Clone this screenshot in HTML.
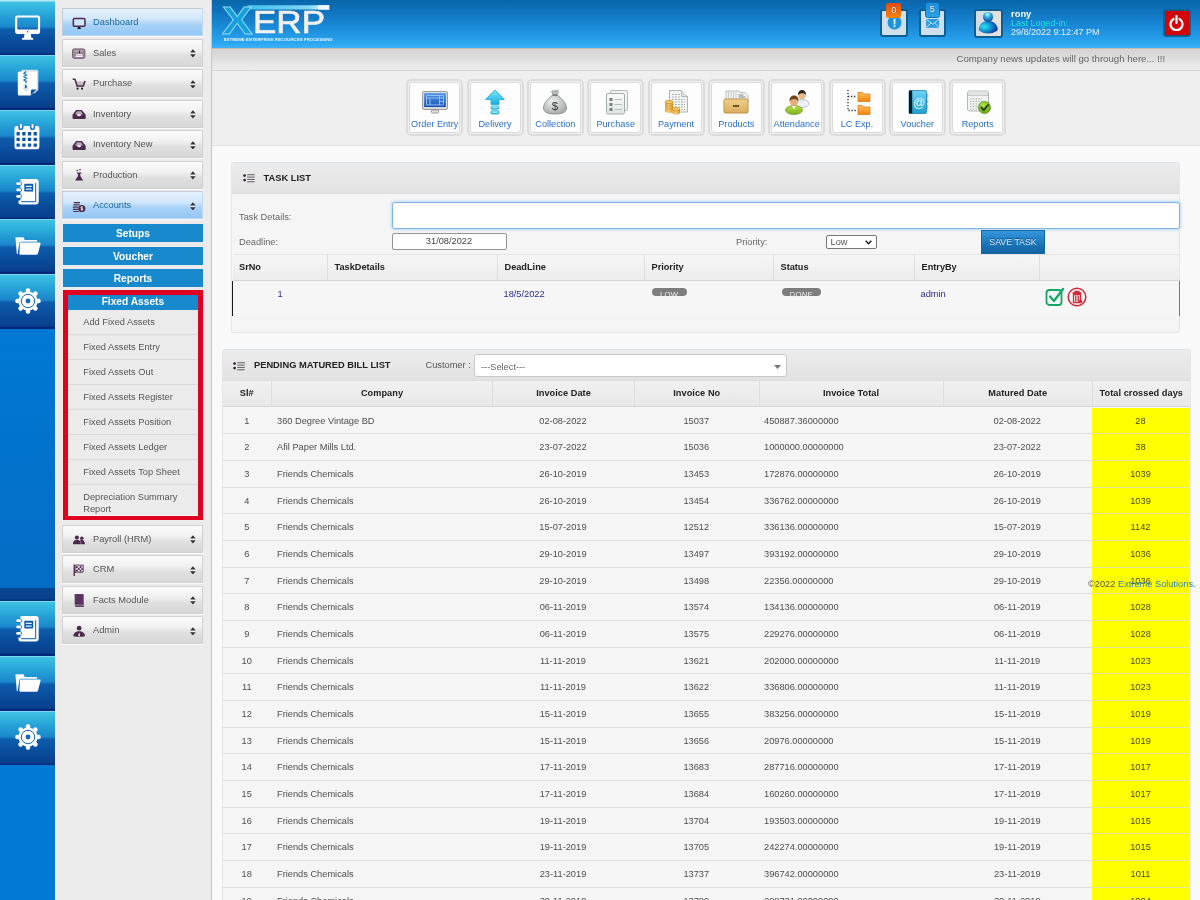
<!DOCTYPE html>
<html lang="en"><head><meta charset="utf-8"><title>XERP Dashboard</title>
<style>
*{box-sizing:border-box}
html,body{margin:0;padding:0}
body{width:1200px;height:900px;overflow:hidden;position:relative;background:#f9f9f9;font-family:"Liberation Sans",sans-serif;font-size:9.25px;color:#555}
#app{position:absolute;left:0;top:0;width:1200px;height:900px;overflow:hidden;will-change:transform}
.abs{position:absolute}
#lb{position:absolute;left:0;top:0;width:54.5px;height:900px;background:#0079d4;overflow:hidden}
.tile{position:absolute;left:0;width:55px;height:54.7px;background:linear-gradient(#a4e6f6 0,#3dc0e3 1.300px,#30b2dd 8px,#2299d3 18px,#1b88cd 25.500px,#0d5cac 28.500px,#0a4d9d 40px,#083f8d 52.200px,#04297b 53.200px,#04297b 54.700px)}
.tile svg{position:absolute}
#sb{position:absolute;left:54.5px;top:0;width:157.5px;height:900px;background:#ebebeb;border-left:2.500px solid #f4eeea;border-right:1px solid #c6c6c6}
.mi{position:absolute;left:62px;width:141.400px;height:28px;border:1px solid #d0d0d0;border-radius:1px;background:linear-gradient(#fbfbfb 0,#f1f1f1 38%,#e0e0e0 60%,#d7d7d7 100%);color:#555;line-height:26.600px;padding-left:30px;font-size:9.3px;box-shadow:0 1px 0 #fafafa}
.mi.on{background:linear-gradient(#e4f1fd 0,#d2e7fb 38%,#a8d2f7 60%,#93c7f5 100%);border-color:#c6ccd4 #c3dcf3 #b9d5ee #c6ccd4;color:#1d6a9c}
.mi .ic{position:absolute;left:8.500px;top:7.800px;width:14.300px;height:12.500px}
.mi .ar{position:absolute;right:6.800px;top:9.500px;width:5.800px;height:8.800px}
.sh{position:absolute;left:63px;width:140px;height:18px;background:#1989ce;color:#fff;font-weight:bold;font-size:10.2px;text-align:center;line-height:19.400px}
.si{position:absolute;left:68px;width:130px;height:25px;border-bottom:1px solid #d9d9d9;box-shadow:0 1px 0 #f3f3f3;background:#ebebeb;color:#555;padding-left:15.5px;line-height:24px;font-size:9.25px}

#hd{position:absolute;left:212px;top:0;width:988px;height:48.8px;background:linear-gradient(#0a66aa 0,#0f74bf 25%,#1c8ddb 60%,#2ba7f2 90%,#3fb0f4 100%);border-bottom:1px solid #c9b8b0}
#nb{position:absolute;left:212px;top:48.8px;width:988px;height:22.2px;background:linear-gradient(#d5d5d5,#d9d9d9 30%,#e6e6e6 70%,#ececec);border-bottom:1px solid #d2d2d2}
#ql{position:absolute;left:212px;top:71px;width:988px;height:75px;background:#efefef;border-bottom:1px solid #e2e2e2}
.hb{position:absolute;top:8.7px;width:27.2px;height:28px;border:2.500px solid #0d5f92;border-radius:3px;background:#cfe0ec}
.bdg{position:absolute;top:-7.7px;left:4px;width:14.500px;height:15px;border-radius:2.500px;color:#fff;font-size:9px;text-align:center;line-height:14px;text-shadow:0 0 1px #333}
.qb{position:absolute;top:79.4px;width:57px;height:57px;border:2px solid #dcdcdc;border-radius:5px;background:#efefef}
.qb i{position:absolute;left:1px;top:1px;right:1px;bottom:1px;background:#fdfdfd;border:1px solid #dadada;border-radius:3px}
.qb span{position:absolute;left:-6px;right:-6px;top:38px;text-align:center;color:#2a72cc;font-size:9.15px;line-height:11px;white-space:nowrap}
.qb svg{position:absolute;left:12.6px;top:7.800px;width:28px;height:26px}

.pn{position:absolute;background:#f5f5f5;border:1px solid #e6e6e6;border-top-color:#dbe4ec;border-radius:3px}
.ph{position:absolute;left:0;right:0;top:0;height:31px;background:linear-gradient(#ececec,#e2e2e2);border-bottom:1px solid #dedede;border-radius:3px 3px 0 0}
.pt{position:absolute;top:0;line-height:31px;font-weight:bold;font-size:9.3px;color:#222;white-space:nowrap}
.lbl{position:absolute;color:#666;font-size:9.25px;line-height:11px;white-space:nowrap}
.th{position:absolute;top:0;height:100%;border-left:1px solid #dedede;font-weight:bold;color:#222;font-size:9.2px;white-space:nowrap}
.t1h{position:absolute;left:232.5px;top:254.2px;width:946px;height:26.5px;background:linear-gradient(#f6f6f6,#ececec);border-top:1px solid #e3e3e3;border-bottom:1.500px solid #d4d4d4}
.t1h .th{line-height:25px;padding-left:6.500px}
.nv{position:absolute;color:#2a2a8c;font-size:9.25px;line-height:11px;white-space:nowrap}
.pill{position:absolute;height:8px;border-radius:4px;background:#7d7d7d;color:#f0f0f0;font-size:7.8px;font-weight:normal;text-align:center;line-height:13.500px;letter-spacing:.2px}
.t2h{position:absolute;left:222.5px;top:380.5px;width:967px;height:26.700px;background:linear-gradient(#f0f0f0,#e8e8e8);border-bottom:1.500px solid #d6d6d6}
.t2h .th{line-height:25px;text-align:center;letter-spacing:.05px}
.r{position:absolute;left:222.5px;width:967px;height:26.67px;border-bottom:1px solid #e0e0e0;line-height:26.400px;font-size:9.25px;color:#4e4e4e}
.r b{position:absolute;top:0;font-weight:normal;white-space:nowrap}
.r .y{position:absolute;left:869.5px;width:97px;top:0;height:26.67px;background:#ffff00;text-align:center;color:#4a4a08;border-bottom:1px solid #e4e49a}
</style></head>
<body>
<div id="app">
<div id="lb"><div class="abs" style="left:0;top:0;width:55px;height:1px;background:#b4e6f4"></div><div class="abs" style="left:0;top:328px;width:55px;height:260px;background:linear-gradient(#0079d4,#046cc4)"></div><div class="abs" style="left:0;top:588px;width:55px;height:13px;background:linear-gradient(#0a4696,#073f8c 80%,#062f78)"></div><div class="tile" style="top:0.5px"><svg style="left:15px;top:14.500px" width="26" height="26" viewBox="0 0 26 26"><path d="M2.600 0.400h20a2.500 2.500 0 0 1 2.500 2.500v13.700a2.500 2.500 0 0 1 -2.500 2.500h-20a2.500 2.500 0 0 1 -2.500 -2.500v-13.700a2.500 2.500 0 0 1 2.500 -2.500zM3 2.600a.8 .8 0 0 0 -.8 .8v10.200a.8 .8 0 0 0 .8 .8h19.200a.8 .8 0 0 0 .8 -.8v-10.200a.8 .8 0 0 0 -.8 -.8z" fill="#fff" fill-rule="evenodd"/><path d="M9.500 19h6.200l0.900 4.200h-8z" fill="#fff"/><rect x="7" y="23" width="11.200" height="1.700" rx=".5" fill="#fff"/><circle cx="12.600" cy="16.800" r="0.800" fill="#0c5bab"/></svg></div><div class="tile" style="top:55.2px"><svg style="left:15.500px;top:13.350px" width="24" height="28" viewBox="0 0 24 28"><path d="M5.500 0.700h15.300a1.500 1.500 0 0 1 1.500 1.500v18.500l-3.500 3.500h-13.300z" fill="#cfe0f0"/><path d="M3.300 2.500h16.100a1.500 1.500 0 0 1 1.500 1.500v16.200l-6.300 6.300h-11.300a1.500 1.500 0 0 1 -1.500 -1.500v-21a1.500 1.500 0 0 1 1.500 -1.500z" fill="#fdfdfd"/><path d="M14.800 26.300v-4.300a1.500 1.500 0 0 1 1.500 -1.500h4.300z" fill="#0d52a4"/><path d="M10.200 2.500l-2.300 1.700l2.600 1.700l-2.600 1.700l2.600 1.700l-2.600 1.700l2.600 1.700l-1 1" fill="none" stroke="#1a74c0" stroke-width="1.200"/><rect x="8" y="14.500" width="3.600" height="7.200" rx="1.600" fill="#dfe9f4" stroke="#b9cde4" stroke-width=".5"/><rect x="9" y="16" width="1.600" height="3.400" rx=".8" fill="#0d52a4"/></svg></div><div class="tile" style="top:109.9px"><svg style="left:14.400px;top:14.100px" width="26" height="26" viewBox="0 0 26 26"><rect x="0.500" y="1.900" width="24.900" height="23.300" rx="2.200" fill="#fdfdfd"/><path d="M4.300 1.500v2a2.600 2.600 0 0 0 5.200 0v-2zM15.900 1.500v2a2.600 2.600 0 0 0 5.200 0v-2z" fill="#1a7cc4"/><rect x="5.900" y="0" width="2" height="4.600" rx="1" fill="#fdfdfd"/><rect x="17.500" y="0" width="2" height="4.600" rx="1" fill="#fdfdfd"/><g fill="#0c55a8"><rect x="2.5" y="8.1" width="3.300" height="3.300" rx=".5"/><rect x="8.2" y="8.1" width="3.300" height="3.300" rx=".5"/><rect x="13.9" y="8.1" width="3.300" height="3.300" rx=".5"/><rect x="19.6" y="8.1" width="3.300" height="3.300" rx=".5"/><rect x="2.5" y="13.8" width="3.300" height="3.300" rx=".5"/><rect x="8.2" y="13.8" width="3.300" height="3.300" rx=".5"/><rect x="13.9" y="13.8" width="3.300" height="3.300" rx=".5"/><rect x="19.6" y="13.8" width="3.300" height="3.300" rx=".5"/><rect x="2.5" y="19.4" width="3.300" height="3.300" rx=".5"/><rect x="8.2" y="19.4" width="3.300" height="3.300" rx=".5"/><rect x="13.9" y="19.4" width="3.300" height="3.300" rx=".5"/><rect x="19.6" y="19.4" width="3.300" height="3.300" rx=".5"/></g></svg></div><div class="tile" style="top:164.6px"><svg style="left:15.500px;top:13.350px" width="24" height="28" viewBox="0 0 24 28"><path d="M4.500 0.900h15.200a3 3 0 0 1 3 3v19.700a3 3 0 0 1 -3 3h-15a2.300 2.300 0 0 1 -2.300 -2.300v-1.800h2.100z" fill="#fdfdfd"/><path d="M19.700 5v18.700h-14.500" fill="none" stroke="#0f5cac" stroke-width="1"/><rect x="8.300" y="5.800" width="8.900" height="7.600" rx=".6" fill="#0f5cac"/><path d="M9.800 8.300h5.900M9.800 11.200h5.900" stroke="#e8f0f8" stroke-width="1.300"/><g fill="#fdfdfd" stroke="#1068b6" stroke-width=".9"><rect x="0.300" y="4.300" width="5.400" height="2.800" rx="1.400"/><rect x="0.300" y="10.500" width="5.400" height="2.800" rx="1.400"/><rect x="0.300" y="16.900" width="5.400" height="2.800" rx="1.400"/></g><g fill="#fdfdfd"><rect x="0.300" y="4.300" width="4.600" height="2.800" rx="1.400"/><rect x="0.300" y="10.500" width="4.600" height="2.800" rx="1.400"/><rect x="0.300" y="16.900" width="4.600" height="2.800" rx="1.400"/></g></svg></div><div class="tile" style="top:219.3px"><svg style="left:15.200px;top:18.200px" width="26" height="18" viewBox="0 0 26 18"><path d="M0.400 0.300h8.200l1.100 2.600h12.400v1.900h-15.800q-1.700 0 -2 1.700l-1.600 10.400h-0.900z" fill="#f6f9fc"/><path d="M6.300 5.600h18.200q1.400 0 1 1.400l-2.500 9.400q-.4 1.400 -1.800 1.400h-15.600q-1.400 0 -1.200 -1.400l0.500 -9.400q.1 -1.400 1.400 -1.400z" fill="#fdfdfd"/></svg></div><div class="tile" style="top:274.0px"><svg style="left:14px;top:12.600px" width="28" height="28" viewBox="-14 -14 28 28"><g fill="#fdfdfd"><rect x="-2.200" y="-12.700" width="4.400" height="6" rx="1.900" transform="rotate(0)"/><rect x="-2.200" y="-12.700" width="4.400" height="6" rx="1.900" transform="rotate(45)"/><rect x="-2.200" y="-12.700" width="4.400" height="6" rx="1.900" transform="rotate(90)"/><rect x="-2.200" y="-12.700" width="4.400" height="6" rx="1.900" transform="rotate(135)"/><rect x="-2.200" y="-12.700" width="4.400" height="6" rx="1.900" transform="rotate(180)"/><rect x="-2.200" y="-12.700" width="4.400" height="6" rx="1.900" transform="rotate(225)"/><rect x="-2.200" y="-12.700" width="4.400" height="6" rx="1.900" transform="rotate(270)"/><rect x="-2.200" y="-12.700" width="4.400" height="6" rx="1.900" transform="rotate(315)"/></g><circle r="9.600" fill="#fdfdfd"/><circle r="6.700" fill="none" stroke="#1566b6" stroke-width="1"/><circle r="2.400" fill="#1566b6"/></svg></div><div class="tile" style="top:601.3px"><svg style="left:15.500px;top:13.350px" width="24" height="28" viewBox="0 0 24 28"><path d="M4.500 0.900h15.200a3 3 0 0 1 3 3v19.700a3 3 0 0 1 -3 3h-15a2.300 2.300 0 0 1 -2.300 -2.300v-1.800h2.100z" fill="#fdfdfd"/><path d="M19.700 5v18.700h-14.500" fill="none" stroke="#0f5cac" stroke-width="1"/><rect x="8.300" y="5.800" width="8.900" height="7.600" rx=".6" fill="#0f5cac"/><path d="M9.800 8.300h5.900M9.800 11.200h5.900" stroke="#e8f0f8" stroke-width="1.300"/><g fill="#fdfdfd" stroke="#1068b6" stroke-width=".9"><rect x="0.300" y="4.300" width="5.400" height="2.800" rx="1.400"/><rect x="0.300" y="10.500" width="5.400" height="2.800" rx="1.400"/><rect x="0.300" y="16.900" width="5.400" height="2.800" rx="1.400"/></g><g fill="#fdfdfd"><rect x="0.300" y="4.300" width="4.600" height="2.800" rx="1.400"/><rect x="0.300" y="10.500" width="4.600" height="2.800" rx="1.400"/><rect x="0.300" y="16.900" width="4.600" height="2.800" rx="1.400"/></g></svg></div><div class="tile" style="top:656.0px"><svg style="left:15.200px;top:18.200px" width="26" height="18" viewBox="0 0 26 18"><path d="M0.400 0.300h8.200l1.100 2.600h12.400v1.900h-15.800q-1.700 0 -2 1.700l-1.600 10.400h-0.900z" fill="#f6f9fc"/><path d="M6.300 5.600h18.200q1.400 0 1 1.400l-2.500 9.400q-.4 1.400 -1.800 1.400h-15.600q-1.400 0 -1.200 -1.400l0.500 -9.400q.1 -1.400 1.400 -1.400z" fill="#fdfdfd"/></svg></div><div class="tile" style="top:710.7px"><svg style="left:14px;top:12.600px" width="28" height="28" viewBox="-14 -14 28 28"><g fill="#fdfdfd"><rect x="-2.200" y="-12.700" width="4.400" height="6" rx="1.900" transform="rotate(0)"/><rect x="-2.200" y="-12.700" width="4.400" height="6" rx="1.900" transform="rotate(45)"/><rect x="-2.200" y="-12.700" width="4.400" height="6" rx="1.900" transform="rotate(90)"/><rect x="-2.200" y="-12.700" width="4.400" height="6" rx="1.900" transform="rotate(135)"/><rect x="-2.200" y="-12.700" width="4.400" height="6" rx="1.900" transform="rotate(180)"/><rect x="-2.200" y="-12.700" width="4.400" height="6" rx="1.900" transform="rotate(225)"/><rect x="-2.200" y="-12.700" width="4.400" height="6" rx="1.900" transform="rotate(270)"/><rect x="-2.200" y="-12.700" width="4.400" height="6" rx="1.900" transform="rotate(315)"/></g><circle r="9.600" fill="#fdfdfd"/><circle r="6.700" fill="none" stroke="#1566b6" stroke-width="1"/><circle r="2.400" fill="#1566b6"/></svg></div></div>
<div id="sb"></div>
<div class="mi on" style="top:8.2px"><svg class="ic" viewBox="0 0 16 14"><rect x="1.500" y="1.800" width="13" height="8.500" rx="1.200" fill="#cfe6fa" stroke="#4a2a4a" stroke-width="1.700"/><path d="M5.500 14h5l-1.500 -2.800h-2z" fill="#1a1a1a"/></svg>Dashboard</div><div class="mi" style="top:38.7px"><svg class="ic" viewBox="0 0 16 14"><rect x="0.600" y="2.100" width="13.800" height="10.600" rx="1.800" fill="#9a8a98" stroke="#6a556a" stroke-width="1"/><path d="M2.500 4.400h10" stroke="#c9bfc8" stroke-width="1"/><path d="M8.400 4v3.200" stroke="#4a2050" stroke-width="1.300"/><path d="M3.800 11.300l1.400 -3.600h5.800l1.400 3.600z" fill="#f6f2f6"/><path d="M5.800 9.300h.01M7.900 9.300h.01M10 9.300h.01" stroke="#6a556a" stroke-width="1" stroke-linecap="round"/></svg>Sales<svg class="ar" viewBox="0 0 7 11"><path d="M3.500 0.300l3.400 4.200h-6.800z M3.500 10.700l3.400 -4.200h-6.800z" fill="#333"/><path d="M0 5.500h7" stroke="#fafafa" stroke-width=".8"/></svg></div><div class="mi" style="top:69.2px"><svg class="ic" viewBox="0 0 16 14"><path d="M4.800 3.800h9l-1.500 4.400h-6.200z" fill="#c4bec4"/><path d="M0.800 1.300h2.500l2.400 7.700h7l1.900 -5.700" fill="none" stroke="#4a2a4a" stroke-width="1.700" stroke-linejoin="round"/><rect x="5.200" y="10.800" width="2.100" height="2.100" fill="#2a1528"/><rect x="10.200" y="10.800" width="2.100" height="2.100" fill="#2a1528"/></svg>Purchase<svg class="ar" viewBox="0 0 7 11"><path d="M3.500 0.300l3.400 4.200h-6.800z M3.500 10.700l3.400 -4.200h-6.800z" fill="#333"/><path d="M0 5.500h7" stroke="#fafafa" stroke-width=".8"/></svg></div><div class="mi" style="top:99.7px"><svg class="ic" viewBox="0 0 16 14"><path d="M0.600 7.500l4 -5.400h6.400l4.300 5.400v3.700a1 1 0 0 1 -1 1h-12.700a1 1 0 0 1 -1 -1z" fill="#4a2a4a"/><path d="M3.400 7.200l2.100 -3.500h4.700l2.100 3.500h-2.500q-.3 1.900 -1.900 1.900t-1.900 -1.900z" fill="#b3a3b3"/><path d="M5.400 7.200h5q-.4 1.900 -2.500 1.900t-2.500 -1.900z" fill="#fff"/></svg>Inventory<svg class="ar" viewBox="0 0 7 11"><path d="M3.500 0.300l3.400 4.200h-6.800z M3.500 10.700l3.400 -4.200h-6.800z" fill="#333"/><path d="M0 5.500h7" stroke="#fafafa" stroke-width=".8"/></svg></div><div class="mi" style="top:130.2px"><svg class="ic" viewBox="0 0 16 14"><path d="M0.600 7.500l4 -5.400h6.400l4.300 5.400v3.700a1 1 0 0 1 -1 1h-12.700a1 1 0 0 1 -1 -1z" fill="#4a2a4a"/><path d="M3.400 7.200l2.100 -3.500h4.700l2.100 3.500h-2.500q-.3 1.900 -1.900 1.900t-1.900 -1.900z" fill="#b3a3b3"/><path d="M5.400 7.200h5q-.4 1.900 -2.500 1.900t-2.500 -1.900z" fill="#fff"/></svg>Inventory New<svg class="ar" viewBox="0 0 7 11"><path d="M3.500 0.300l3.400 4.200h-6.800z M3.500 10.700l3.400 -4.200h-6.800z" fill="#333"/><path d="M0 5.500h7" stroke="#fafafa" stroke-width=".8"/></svg></div><div class="mi" style="top:160.7px"><svg class="ic" viewBox="0 0 16 14"><path d="M5.500 4h5v1.200h-1.500l0.500 3l3 4.800h-9l3 -4.800l0.500 -3h-1.500z" fill="#4a2a4a"/><rect x="5.200" y="1" width="1.500" height="1.500" fill="#4a2a4a"/><rect x="8.200" y="0" width="1.500" height="1.500" fill="#4a2a4a"/></svg>Production<svg class="ar" viewBox="0 0 7 11"><path d="M3.500 0.300l3.400 4.200h-6.800z M3.500 10.700l3.400 -4.200h-6.800z" fill="#333"/><path d="M0 5.500h7" stroke="#fafafa" stroke-width=".8"/></svg></div><div class="mi on" style="top:191.2px"><svg class="ic" viewBox="0 0 16 14"><path d="M2 3h7M1.500 5.500h7M1 8h6M1 10.500h6M1.500 13h6" stroke="#4a2a4a" stroke-width="1.500"/><circle cx="11" cy="9.500" r="4" fill="#4a2a4a"/><path d="M11 7v5M12.300 8.200c-1 -.8 -2.500 -.5 -2.500 .4s2.500 .6 2.500 1.600s-1.600 1.200 -2.600 .4" stroke="#fff" stroke-width=".8" fill="none"/></svg>Accounts<svg class="ar" viewBox="0 0 7 11"><path d="M3.500 0.300l3.400 4.200h-6.800z M3.500 10.700l3.400 -4.200h-6.800z" fill="#333"/><path d="M0 5.500h7" stroke="#fafafa" stroke-width=".8"/></svg></div><div class="mi" style="top:524.7px"><svg class="ic" viewBox="0 0 16 14"><circle cx="5.500" cy="5" r="2.300" fill="#4a2a4a"/><path d="M1 12.500c0 -3.500 2 -5 4.500 -5s4.500 1.500 4.500 5z" fill="#4a2a4a"/><circle cx="11" cy="5.800" r="1.900" fill="#4a2a4a"/><path d="M9 7.800c3 -1 5.500 1 5.500 4.700h-4z" fill="#4a2a4a"/></svg>Payroll (HRM)<svg class="ar" viewBox="0 0 7 11"><path d="M3.500 0.300l3.400 4.200h-6.800z M3.500 10.700l3.400 -4.200h-6.800z" fill="#333"/><path d="M0 5.500h7" stroke="#fafafa" stroke-width=".8"/></svg></div><div class="mi" style="top:555.2px"><svg class="ic" viewBox="0 0 16 14"><path d="M2.500 0.500v13.500" stroke="#4a2a4a" stroke-width="1.500"/><path d="M3.500 1.500c3 -1.500 6 1 9 -.5v8c-3 1.500 -6 -1 -9 .5z" fill="#e8e0e8" stroke="#4a2a4a" stroke-width="1"/><path d="M4.500 2.500h2v2h-2zM8.500 2.500h2v2h-2zM6.500 4.500h2v2h-2zM10.500 4.500h1.500v2h-1.500zM4.500 6.500h2v2h-2zM8.500 6.500h2v2h-2z" fill="#4a2a4a"/></svg>CRM<svg class="ar" viewBox="0 0 7 11"><path d="M3.500 0.300l3.400 4.200h-6.800z M3.500 10.700l3.400 -4.200h-6.800z" fill="#333"/><path d="M0 5.500h7" stroke="#fafafa" stroke-width=".8"/></svg></div><div class="mi" style="top:585.7px"><svg class="ic" viewBox="0 0 16 14"><path d="M3 1.500a1 1 0 0 1 1 -1h8.500v12h-8.500a1 1 0 0 0 0 1.500h9v-1" fill="none" stroke="#4a2a4a" stroke-width="1"/><rect x="3" y="0.500" width="9.500" height="11.500" fill="#5a3560"/></svg>Facts Module<svg class="ar" viewBox="0 0 7 11"><path d="M3.500 0.300l3.400 4.200h-6.800z M3.500 10.700l3.400 -4.200h-6.800z" fill="#333"/><path d="M0 5.500h7" stroke="#fafafa" stroke-width=".8"/></svg></div><div class="mi" style="top:616.2px"><svg class="ic" viewBox="0 0 16 14"><circle cx="8" cy="3.500" r="2.600" fill="#4a2a4a"/><path d="M1.500 12.500c0 -3.500 3 -5.500 6.500 -5.500s6.500 2 6.500 5.500c-4 1 -9 1 -13 0z" fill="#4a2a4a"/><path d="M8 8.500l1 3l-1 1.500l-1 -1.500z" fill="#fff"/></svg>Admin<svg class="ar" viewBox="0 0 7 11"><path d="M3.500 0.300l3.400 4.200h-6.800z M3.500 10.700l3.400 -4.200h-6.800z" fill="#333"/><path d="M0 5.500h7" stroke="#fafafa" stroke-width=".8"/></svg></div>
<div class="sh" style="top:224.4px">Setups</div><div class="sh" style="top:246.8px">Voucher</div><div class="sh" style="top:269.3px">Reports</div><div class="abs" style="left:62.8px;top:290px;width:140.200px;height:230px;border:5px solid #e00020"></div><div class="sh" style="left:67.8px;width:130.200px;top:295px;height:15px;line-height:13px">Fixed Assets</div><div class="si" style="left:67.8px;width:130.200px;top:310.0px">Add Fixed Assets</div><div class="si" style="left:67.8px;width:130.200px;top:335.0px">Fixed Assets Entry</div><div class="si" style="left:67.8px;width:130.200px;top:360.0px">Fixed Assets Out</div><div class="si" style="left:67.8px;width:130.200px;top:385.0px">Fixed Assets Register</div><div class="si" style="left:67.8px;width:130.200px;top:410.0px">Fixed Assets Position</div><div class="si" style="left:67.8px;width:130.200px;top:435.0px">Fixed Assets Ledger</div><div class="si" style="left:67.8px;width:130.200px;top:460.0px">Fixed Assets Top Sheet</div><div class="si" style="left:67.8px;width:130.200px;top:485px;height:30px;line-height:11.800px;padding-top:6.800px;border-bottom:0">Depreciation Summary<br>Report</div><div id="hd"><svg class="abs" style="left:8px;top:2px" width="130" height="44" viewBox="0 0 130 44"><defs><linearGradient id="sw" x1="0" x2="1"><stop offset="0" stop-color="#3fc0ee"/><stop offset=".75" stop-color="#7fd6f5"/><stop offset="1" stop-color="#f4fbff"/></linearGradient></defs><path d="M28 3.300h81v4.200h-84z" fill="url(#sw)"/><path d="M98 3h11.500v4.800h-11.500z" fill="#f4fbff" opacity=".75"/><text x="2" y="31.500" font-family="Liberation Sans, sans-serif" font-weight="bold" font-size="39.500" textLength="30.500" lengthAdjust="spacingAndGlyphs" fill="#169fdb" stroke="#8fdcf7" stroke-width=".9">X</text><text x="33" y="31.100" font-family="Liberation Sans, sans-serif" font-size="31" textLength="72" lengthAdjust="spacingAndGlyphs" fill="#f4f0ee" stroke="#f4f0ee" stroke-width=".6" stroke-linejoin="round">ERP</text><text x="3.700" y="39.400" font-family="Liberation Sans, sans-serif" font-weight="bold" font-size="4.200" textLength="109" lengthAdjust="spacingAndGlyphs" fill="#e8f6ff">EXTREME ENTERPRISE RECOURCES PROCESSING</text></svg><div class="hb" style="left:668.4px"><svg class="abs" style="left:4.200px;top:4.600px" width="15" height="15" viewBox="0 0 16 16"><circle cx="8" cy="8" r="7.500" fill="#1e93dc"/><text x="8" y="13.200" text-anchor="middle" font-family="Liberation Sans, sans-serif" font-weight="bold" font-size="13.500" fill="#fff">!</text></svg><div class="bdg" style="background:linear-gradient(#e64a0a,#f0860e)">0</div></div><div class="hb" style="left:707.3px"><svg class="abs" style="left:4.700px;top:8.100px" width="13.500" height="8.800" viewBox="0 0 15 10"><rect width="15" height="10" fill="#2a9be2"/><path d="M0.500 0.500l7 5.500l7 -5.500M0.500 9.500l5 -5M14.500 9.500l-5 -5" fill="none" stroke="#d8ecf8" stroke-width="1"/></svg><div class="bdg" style="left:3.500px;top:-8.700px;width:15px;height:15.500px;background:linear-gradient(#1b8fdd,#2aa0ea);border:1px solid #0d6fae;line-height:13px">5</div></div><div class="hb" style="left:762px;top:9px;width:29px;height:28.800px;background:linear-gradient(100deg,#cddbe8,#e0dedc 40%,#e4e1de)"><svg class="abs" style="left:0;top:0" width="24" height="24" viewBox="0 0 24 24"><defs><radialGradient id="av" cx=".3" cy=".45" r=".75"><stop offset="0" stop-color="#2ee6f0"/><stop offset=".45" stop-color="#1296d8"/><stop offset="1" stop-color="#0a2a8c"/></radialGradient><radialGradient id="av2" cx=".45" cy=".25" r=".7"><stop offset="0" stop-color="#d8fbff"/><stop offset=".4" stop-color="#35b8e6"/><stop offset="1" stop-color="#0b4aa6"/></radialGradient></defs><path d="M3.300 19.800q-1.200 -2.200 0 -4.400q2.600 -5.400 8.900 -5.400t8.900 5.400q1.200 2.200 0 4.400q-3.900 2.800 -8.900 2.800t-8.900 -2.800z" fill="url(#av)"/><circle cx="12" cy="5.900" r="5" fill="url(#av2)"/></svg></div><div class="abs" style="left:799px;top:8.800px;color:#fff;font-weight:bold;font-size:9.4px;line-height:10px">rony</div><div class="abs" style="left:799px;top:18.100px;color:#22e0e0;font-size:9px;line-height:10px">Last Loged-in:</div><div class="abs" style="left:799px;top:26.500px;color:#e4f2fb;font-size:9px;line-height:10px">29/8/2022 9:12:47 PM</div><div class="abs" style="left:950.5px;top:8.700px;width:28px;height:28.300px;border:2.500px solid #115f8e;border-radius:3.500px;background:#d20508"><svg class="abs" style="left:4.500px;top:4px" width="15" height="16" viewBox="0 0 15 16"><path d="M4.500 4a6 6 0 1 0 6 0" fill="none" stroke="#fff" stroke-width="2.200" stroke-linecap="round"/><path d="M7.500 1v7" stroke="#fff" stroke-width="2.200" stroke-linecap="round"/></svg></div></div>
<div id="nb"><div class="abs" style="left:744.5px;top:4.500px;font-size:9.65px;color:#666;line-height:11px;white-space:nowrap">Company news updates will go through here... !!!</div></div>
<div id="ql"></div>
<div class="qb" style="left:406.2px"><i></i><svg style="margin-left:0.0px" viewBox="0 0 28 26"><defs><linearGradient id="oe" x1="0" y1="0" x2="0" y2="1"><stop offset="0" stop-color="#4f96ea"/><stop offset="1" stop-color="#1148b0"/></linearGradient></defs><rect x="1.500" y="2.500" width="25" height="18" rx="1.500" fill="#d9dadb" stroke="#9a9c9e" stroke-width="1"/><rect x="3.200" y="4.200" width="21.600" height="13.800" fill="url(#oe)"/><path d="M5.500 6.500h17v9.500h-17zM5.500 9h17M9 9v7M18.500 6.500v9.500M18.500 12.500h4" fill="#3f7fd8" fill-opacity=".35" stroke="#9cc6f4" stroke-width=".9"/><rect x="10.500" y="21" width="7" height="3" rx="1" fill="#e4e4e4" stroke="#8f8f8f" stroke-width=".9"/></svg><span>Order Entry</span></div><div class="qb" style="left:466.5px"><i></i><svg style="margin-left:0.0px" viewBox="0 0 28 26"><defs><linearGradient id="dl" x1="0" y1="0" x2="0" y2="1"><stop offset="0" stop-color="#7fe6fb"/><stop offset="1" stop-color="#16aee0"/></linearGradient></defs><path d="M14 1l9.500 9.500h-5.500v5h-8v-5h-5.500z" fill="url(#dl)" stroke="#1aa8d8" stroke-width=".8" stroke-linejoin="round"/><rect x="10" y="17" width="8" height="3.300" rx="1.200" fill="url(#dl)" stroke="#1aa8d8" stroke-width=".7"/><rect x="10" y="21.700" width="8" height="3.300" rx="1.200" fill="url(#dl)" stroke="#1aa8d8" stroke-width=".7"/><path d="M11.500 18.600h5M11.500 23.300h5" stroke="#d8f6ff" stroke-width=".9"/></svg><span>Delivery</span></div><div class="qb" style="left:526.9px"><i></i><svg style="margin-left:0.0px" viewBox="0 0 28 26"><defs><radialGradient id="cl" cx=".4" cy=".35" r=".7"><stop offset="0" stop-color="#eef1f0"/><stop offset="1" stop-color="#a3aaa7"/></radialGradient></defs><path d="M10.500 2.500c1.500 -1.500 2.500 0 3.500 -.8s2.500 -.5 3.500 .8l-1.800 3.500h-3.400z" fill="#b9bfbc" stroke="#7d8582" stroke-width=".7"/><path d="M11.800 6h4.400c4 3 9.300 8 9.300 13c0 4 -4 6 -11.500 6s-11.500 -2 -11.500 -6c0 -5 5.300 -10 9.300 -13z" fill="url(#cl)" stroke="#7d8582" stroke-width=".8"/><path d="M11.500 6.200h5" stroke="#6e7673" stroke-width="1.200"/><text x="14" y="21" text-anchor="middle" font-family="Liberation Sans, sans-serif" font-size="11.500" fill="#2e3231">$</text></svg><span>Collection</span></div><div class="qb" style="left:587.2px"><i></i><svg style="margin-left:0.0px" viewBox="0 0 28 26"><defs><linearGradient id="pu" x1="0" y1="0" x2="0" y2="1"><stop offset="0" stop-color="#fafbfb"/><stop offset="1" stop-color="#dfe5e3"/></linearGradient></defs><rect x="8.500" y="1.500" width="17" height="20" rx="1.500" fill="#f1f4f3" stroke="#a9b3b0" stroke-width=".9"/><rect x="4.500" y="4.500" width="18" height="20.500" rx="1.500" fill="url(#pu)" stroke="#9aa5a2" stroke-width=".9"/><g fill="#76807d"><rect x="7.500" y="9" width="3" height="3"/><rect x="7.500" y="14" width="3" height="3"/><rect x="7.500" y="19" width="3" height="3"/></g><path d="M12.500 10.500h7.500M12.500 15.500h7.500M12.500 20.500h7.500" stroke="#b6bfbc" stroke-width="1"/></svg><span>Purchase</span></div><div class="qb" style="left:647.5px"><i></i><svg style="margin-left:0.0px" viewBox="0 0 28 26"><defs><linearGradient id="py" x1="0" y1="0" x2="1" y2="0"><stop offset="0" stop-color="#e9a73a"/><stop offset=".5" stop-color="#f6cb78"/><stop offset="1" stop-color="#d08f22"/></linearGradient></defs><path d="M7.500 1.500h12l6 6v15.500h-18z" fill="#f3f6f5" stroke="#a3adaa" stroke-width=".9"/><path d="M19.500 1.500v6h6" fill="#dde3e1" stroke="#a3adaa" stroke-width=".8"/><path d="M10 5.500h8M10 8h8M10 10.500h13M10 13h13M10 15.500h13M10 18h13M10 20.500h13" stroke="#9aa4a1" stroke-width=".9" stroke-dasharray="1.800 1.200"/><path d="M3 13v8.500c0 1.400 1.800 2.300 4 2.300s4 -.9 4 -2.300v-8.500z" fill="url(#py)"/><ellipse cx="7" cy="13" rx="4" ry="1.800" fill="#f3c36a" stroke="#c98a1c" stroke-width=".6"/><path d="M3 16c1.500 1.500 6.500 1.500 8 0M3 19c1.500 1.500 6.500 1.500 8 0" fill="none" stroke="#c98a1c" stroke-width=".6"/><path d="M10 20v3.500c0 1.300 1.800 2.100 4 2.100s4 -.8 4 -2.100v-3.500z" fill="url(#py)"/><ellipse cx="14" cy="20" rx="4" ry="1.700" fill="#f3c36a" stroke="#c98a1c" stroke-width=".6"/></svg><span>Payment</span></div><div class="qb" style="left:707.8px"><i></i><svg style="margin-left:0.0px" viewBox="0 0 28 26"><defs><linearGradient id="pr" x1="0" y1="0" x2="0" y2="1"><stop offset="0" stop-color="#f0d08e"/><stop offset="1" stop-color="#d9ae5e"/></linearGradient></defs><path d="M4 2h13l1 1.500h5l3 3v6h-22z" fill="#f2f4f4" stroke="#a9b0ae" stroke-width=".8"/><path d="M6.500 2.500v8M9 2.500v8M11.500 2.500v8M14 2.500v8" stroke="#bcc3c1" stroke-width=".8"/><path d="M16.500 6h5M16.500 8h7" stroke="#7d8583" stroke-width="1"/><rect x="2" y="10" width="24" height="14" rx="1.200" fill="url(#pr)" stroke="#b58a3f" stroke-width=".9"/><rect x="11" y="16" width="6" height="2" fill="#6e5222"/></svg><span>Products</span></div><div class="qb" style="left:768.2px"><i></i><svg style="margin-left:0.0px" viewBox="0 0 28 26"><defs><linearGradient id="at" x1="0" y1="0" x2="0" y2="1"><stop offset="0" stop-color="#b6dc4e"/><stop offset="1" stop-color="#7eb21f"/></linearGradient></defs><ellipse cx="19" cy="14.500" rx="7" ry="4" fill="#eef2f6" stroke="#a9b6c4" stroke-width=".8"/><circle cx="19" cy="6.500" r="3.800" fill="#e9b98a"/><path d="M15 6c0 -3.500 2 -5 4 -5s4.200 1.500 4 5c-1.500 -2.500 -5.500 -2.500 -8 0z" fill="#2d2419"/><path d="M17 10.500l2 3l2 -3z" fill="#fff" stroke="#a9b6c4" stroke-width=".5"/><ellipse cx="11" cy="21" rx="8.500" ry="4.500" fill="url(#at)" stroke="#6d9b1d" stroke-width=".7"/><circle cx="11" cy="12.500" r="4.200" fill="#e3ac78"/><path d="M6.500 12c0 -4 2.200 -5.500 4.500 -5.500s4.700 1.500 4.500 5.500c-1.800 -2.800 -6.500 -2.800 -9 0z" fill="#6b4320"/><path d="M9 17l2 3.500l2 -3.500z" fill="#f6f9ee"/></svg><span>Attendance</span></div><div class="qb" style="left:828.5px"><i></i><svg style="margin-left:0.5px" viewBox="0 0 28 26"><defs><linearGradient id="lc" x1="0" y1="0" x2="0" y2="1"><stop offset="0" stop-color="#ffc05a"/><stop offset="1" stop-color="#f5820f"/></linearGradient></defs><path d="M4 1v20.500h8M4 7.500h8" fill="none" stroke="#333" stroke-width="1.300" stroke-dasharray="1.300 1.700"/><path d="M14 3.500h4.500l1.200 1.500h6.300v7.500h-12z" fill="url(#lc)" stroke="#d9720a" stroke-width=".7"/><path d="M14 16.500h4.500l1.200 1.500h6.300v7.500h-12z" fill="url(#lc)" stroke="#d9720a" stroke-width=".7"/></svg><span>LC Exp.</span></div><div class="qb" style="left:888.8px"><i></i><svg style="margin-left:0.5px" viewBox="0 0 28 26"><defs><linearGradient id="vo" x1="0" y1="0" x2="0" y2="1"><stop offset="0" stop-color="#6ed3f3"/><stop offset="1" stop-color="#1c9fd6"/></linearGradient></defs><rect x="20" y="5" width="4" height="3.500" rx="1" fill="#c9cdd0" stroke="#8c9296" stroke-width=".5"/><rect x="20" y="10.500" width="4" height="3.500" rx="1" fill="#c9cdd0" stroke="#8c9296" stroke-width=".5"/><rect x="20" y="16" width="4" height="3.500" rx="1" fill="#c9cdd0" stroke="#8c9296" stroke-width=".5"/><rect x="5" y="1.500" width="17.500" height="23" rx="1.500" fill="url(#vo)" stroke="#1583b8" stroke-width=".8"/><rect x="5" y="1.500" width="3.200" height="23" fill="#15181a"/><text x="15.300" y="17.500" text-anchor="middle" font-family="Liberation Sans, sans-serif" font-size="12" fill="#eafaff">@</text></svg><span>Voucher</span></div><div class="qb" style="left:949.2px"><i></i><svg style="margin-left:1.0px" viewBox="0 0 28 26"><defs><radialGradient id="rp" cx=".4" cy=".3" r=".8"><stop offset="0" stop-color="#b7e24e"/><stop offset="1" stop-color="#5ea011"/></radialGradient></defs><rect x="2.500" y="2" width="21" height="20" rx="2" fill="#f1f4f3" stroke="#a8b1ae" stroke-width=".9"/><path d="M2.500 6.500h21" stroke="#a8b1ae" stroke-width="1"/><rect x="3" y="2.500" width="20" height="4" rx="1.500" fill="#dfe5e3"/><path d="M5 10h12M5 12.500h12M5 15h9M5 17.500h8M5 20h8" stroke="#9aa4a1" stroke-width=".9" stroke-dasharray="1.500 1.300"/><circle cx="19.500" cy="18.500" r="6" fill="url(#rp)" stroke="#4f8a12" stroke-width=".8"/><path d="M16.300 18.500l2.400 2.700l4.300 -5.200" fill="none" stroke="#24420a" stroke-width="1.900" stroke-linecap="round" stroke-linejoin="round"/></svg><span>Reports</span></div>
<!--PANELS-->
<div class="pn" style="left:231px;top:161.500px;width:949.300px;height:171.400px"><div class="ph"></div><div class="abs" style="left:10.500px;top:11.500px"><svg width="12.2" height="9.4" viewBox="0 0 13 10"><circle cx="1.700" cy="1.700" r="1.500" fill="#3a2040"/><circle cx="1.700" cy="6.500" r="1.500" fill="#3a2040"/><path d="M4.500 0.800h8M4.500 3.300h8M4.500 5.800h8M4.500 8.300h8" stroke="#555" stroke-width="1"/></svg></div><div class="pt" style="left:31.500px">TASK LIST</div></div>
<div class="lbl" style="left:239px;top:211.500px">Task Details:</div><div class="lbl" style="left:239px;top:236.500px">Deadline:</div><div class="abs" style="left:391.500px;top:202px;width:788px;height:26.500px;background:#fff;border:1px solid #7db4e8;border-radius:3px;box-shadow:0 0 3px 1px #bcd9f3"></div><div class="abs" style="left:391.500px;top:233px;width:115px;height:16.500px;background:#fff;border:1px solid #949494;border-radius:2px;text-align:center;line-height:14.500px;color:#444;font-size:9.25px">31/08/2022</div><div class="lbl" style="left:736px;top:236.500px">Priority:</div><div class="abs" style="left:826px;top:234.500px;width:50.500px;height:14px;background:#fff;border:1px solid #767676;border-radius:2px;line-height:12px;padding-left:3.500px;color:#555;font-size:9.25px">Low<svg class="abs" style="right:4px;top:4px" width="7" height="5" viewBox="0 0 7 5"><path d="M0.700 0.800l2.800 3l2.800 -3" fill="none" stroke="#111" stroke-width="1.300"/></svg></div><div class="abs" style="left:981px;top:230px;width:64px;height:23.500px;background:linear-gradient(#3496dc,#1c78bc 55%,#12629f);border:1px solid #1566a4;color:#d8ecfa;font-size:8.8px;text-align:center;line-height:22px;text-shadow:0 -1px 0 #0a4a80">SAVE TASK</div><div class="t1h"><div class="th" style="left:0.0px;border-left:0;">SrNo</div><div class="th" style="left:94.5px;">TaskDetails</div><div class="th" style="left:264.5px;">DeadLine</div><div class="th" style="left:411.5px;">Priority</div><div class="th" style="left:540.5px;">Status</div><div class="th" style="left:681.5px;">EntryBy</div><div class="th" style="left:806.0px;"></div></div><div class="abs" style="left:231.500px;top:281px;width:948px;height:35px;border-left:1.600px solid #1a1a1a;border-right:1.500px solid #777;background:#f6f6f6"></div><div class="nv" style="left:277.500px;top:289px">1</div><div class="nv" style="left:503.500px;top:289px">18/5/2022</div><div class="nv" style="left:920.500px;top:289px">admin</div><div class="pill" style="left:652px;top:287.500px;width:34.500px">LOW</div><div class="pill" style="left:781.500px;top:287.500px;width:39.500px">DONE</div><svg class="abs" style="left:1045px;top:287px" width="20" height="20" viewBox="0 0 20 20"><rect x="1.500" y="3" width="15" height="15" rx="3" fill="none" stroke="#12a765" stroke-width="1.800"/><path d="M5 9.500l4 4.500l9 -12" fill="none" stroke="#12a765" stroke-width="2.300" stroke-linecap="round" stroke-linejoin="round"/></svg><svg class="abs" style="left:1066.500px;top:287px" width="20" height="20" viewBox="0 0 20 20"><circle cx="10" cy="10" r="8.800" fill="none" stroke="#d22a3a" stroke-width="1.500"/><path d="M5.500 6h9M8 6v-1.500h4v1.500M6.500 7.500h7v8h-7z" fill="none" stroke="#d22a3a" stroke-width="1.300"/><path d="M8.500 8.500v6M10 8.500v6M11.500 8.500v6" stroke="#d22a3a" stroke-width=".9"/><circle cx="13.500" cy="14.500" r="1.800" fill="#d22a3a"/></svg>
<div class="pn" style="left:221.500px;top:348.500px;width:969px;height:560px"><div class="ph"></div><div class="abs" style="left:10px;top:12px"><svg width="12.2" height="9.4" viewBox="0 0 13 10"><circle cx="1.700" cy="1.700" r="1.500" fill="#3a2040"/><circle cx="1.700" cy="6.500" r="1.500" fill="#3a2040"/><path d="M4.500 0.800h8M4.500 3.300h8M4.500 5.800h8M4.500 8.300h8" stroke="#555" stroke-width="1"/></svg></div><div class="pt" style="left:31.500px">PENDING MATURED BILL LIST</div></div>
<div class="lbl" style="left:425.500px;top:359.500px;color:#555">Customer :</div><div class="abs" style="left:473.500px;top:354px;width:313px;height:23px;background:#fff;border:1px solid #c8c8c8;border-radius:3px;line-height:24.500px;padding-left:6.500px;color:#666;font-size:9.25px">---Select---<svg class="abs" style="right:5px;top:9.500px" width="7" height="4" viewBox="0 0 7 4"><path d="M0 0h7l-3.500 4z" fill="#777"/></svg></div><div class="t2h"><div class="th" style="left:0.0px;width:48.5px;border-left:0;">Sl#</div><div class="th" style="left:48.5px;width:221.0px;">Company</div><div class="th" style="left:269.5px;width:142.0px;">Invoice Date</div><div class="th" style="left:411.5px;width:124.5px;">Invoice No</div><div class="th" style="left:536.0px;width:184.0px;">Invoice Total</div><div class="th" style="left:720.0px;width:149.5px;">Matured Date</div><div class="th" style="left:869.5px;width:97.5px;">Total crossed days</div></div>
<div class="r" style="top:407.60px"><b style="left:0;width:48.500px;text-align:center">1</b><b style="left:54.500px">360 Degree Vintage BD</b><b style="left:269.500px;width:142px;text-align:center">02-08-2022</b><b style="left:411.500px;width:124.500px;text-align:center">15037</b><b style="left:541.500px">450887.36000000</b><b style="left:720px;width:149.500px;text-align:center">02-08-2022</b><div class="y">28</div></div>
<div class="r" style="top:434.27px"><b style="left:0;width:48.500px;text-align:center">2</b><b style="left:54.500px">Afil Paper Mills Ltd.</b><b style="left:269.500px;width:142px;text-align:center">23-07-2022</b><b style="left:411.500px;width:124.500px;text-align:center">15036</b><b style="left:541.500px">1000000.00000000</b><b style="left:720px;width:149.500px;text-align:center">23-07-2022</b><div class="y">38</div></div>
<div class="r" style="top:460.94px"><b style="left:0;width:48.500px;text-align:center">3</b><b style="left:54.500px">Friends Chemicals</b><b style="left:269.500px;width:142px;text-align:center">26-10-2019</b><b style="left:411.500px;width:124.500px;text-align:center">13453</b><b style="left:541.500px">172876.00000000</b><b style="left:720px;width:149.500px;text-align:center">26-10-2019</b><div class="y">1039</div></div>
<div class="r" style="top:487.61px"><b style="left:0;width:48.500px;text-align:center">4</b><b style="left:54.500px">Friends Chemicals</b><b style="left:269.500px;width:142px;text-align:center">26-10-2019</b><b style="left:411.500px;width:124.500px;text-align:center">13454</b><b style="left:541.500px">336762.00000000</b><b style="left:720px;width:149.500px;text-align:center">26-10-2019</b><div class="y">1039</div></div>
<div class="r" style="top:514.28px"><b style="left:0;width:48.500px;text-align:center">5</b><b style="left:54.500px">Friends Chemicals</b><b style="left:269.500px;width:142px;text-align:center">15-07-2019</b><b style="left:411.500px;width:124.500px;text-align:center">12512</b><b style="left:541.500px">336136.00000000</b><b style="left:720px;width:149.500px;text-align:center">15-07-2019</b><div class="y">1142</div></div>
<div class="r" style="top:540.95px"><b style="left:0;width:48.500px;text-align:center">6</b><b style="left:54.500px">Friends Chemicals</b><b style="left:269.500px;width:142px;text-align:center">29-10-2019</b><b style="left:411.500px;width:124.500px;text-align:center">13497</b><b style="left:541.500px">393192.00000000</b><b style="left:720px;width:149.500px;text-align:center">29-10-2019</b><div class="y">1036</div></div>
<div class="r" style="top:567.62px"><b style="left:0;width:48.500px;text-align:center">7</b><b style="left:54.500px">Friends Chemicals</b><b style="left:269.500px;width:142px;text-align:center">29-10-2019</b><b style="left:411.500px;width:124.500px;text-align:center">13498</b><b style="left:541.500px">22356.00000000</b><b style="left:720px;width:149.500px;text-align:center">29-10-2019</b><div class="y">1036</div></div>
<div class="r" style="top:594.29px"><b style="left:0;width:48.500px;text-align:center">8</b><b style="left:54.500px">Friends Chemicals</b><b style="left:269.500px;width:142px;text-align:center">06-11-2019</b><b style="left:411.500px;width:124.500px;text-align:center">13574</b><b style="left:541.500px">134136.00000000</b><b style="left:720px;width:149.500px;text-align:center">06-11-2019</b><div class="y">1028</div></div>
<div class="r" style="top:620.96px"><b style="left:0;width:48.500px;text-align:center">9</b><b style="left:54.500px">Friends Chemicals</b><b style="left:269.500px;width:142px;text-align:center">06-11-2019</b><b style="left:411.500px;width:124.500px;text-align:center">13575</b><b style="left:541.500px">229276.00000000</b><b style="left:720px;width:149.500px;text-align:center">06-11-2019</b><div class="y">1028</div></div>
<div class="r" style="top:647.63px"><b style="left:0;width:48.500px;text-align:center">10</b><b style="left:54.500px">Friends Chemicals</b><b style="left:269.500px;width:142px;text-align:center">11-11-2019</b><b style="left:411.500px;width:124.500px;text-align:center">13621</b><b style="left:541.500px">202000.00000000</b><b style="left:720px;width:149.500px;text-align:center">11-11-2019</b><div class="y">1023</div></div>
<div class="r" style="top:674.30px"><b style="left:0;width:48.500px;text-align:center">11</b><b style="left:54.500px">Friends Chemicals</b><b style="left:269.500px;width:142px;text-align:center">11-11-2019</b><b style="left:411.500px;width:124.500px;text-align:center">13622</b><b style="left:541.500px">336806.00000000</b><b style="left:720px;width:149.500px;text-align:center">11-11-2019</b><div class="y">1023</div></div>
<div class="r" style="top:700.97px"><b style="left:0;width:48.500px;text-align:center">12</b><b style="left:54.500px">Friends Chemicals</b><b style="left:269.500px;width:142px;text-align:center">15-11-2019</b><b style="left:411.500px;width:124.500px;text-align:center">13655</b><b style="left:541.500px">383256.00000000</b><b style="left:720px;width:149.500px;text-align:center">15-11-2019</b><div class="y">1019</div></div>
<div class="r" style="top:727.64px"><b style="left:0;width:48.500px;text-align:center">13</b><b style="left:54.500px">Friends Chemicals</b><b style="left:269.500px;width:142px;text-align:center">15-11-2019</b><b style="left:411.500px;width:124.500px;text-align:center">13656</b><b style="left:541.500px">20976.00000000</b><b style="left:720px;width:149.500px;text-align:center">15-11-2019</b><div class="y">1019</div></div>
<div class="r" style="top:754.31px"><b style="left:0;width:48.500px;text-align:center">14</b><b style="left:54.500px">Friends Chemicals</b><b style="left:269.500px;width:142px;text-align:center">17-11-2019</b><b style="left:411.500px;width:124.500px;text-align:center">13683</b><b style="left:541.500px">287716.00000000</b><b style="left:720px;width:149.500px;text-align:center">17-11-2019</b><div class="y">1017</div></div>
<div class="r" style="top:780.98px"><b style="left:0;width:48.500px;text-align:center">15</b><b style="left:54.500px">Friends Chemicals</b><b style="left:269.500px;width:142px;text-align:center">17-11-2019</b><b style="left:411.500px;width:124.500px;text-align:center">13684</b><b style="left:541.500px">160260.00000000</b><b style="left:720px;width:149.500px;text-align:center">17-11-2019</b><div class="y">1017</div></div>
<div class="r" style="top:807.65px"><b style="left:0;width:48.500px;text-align:center">16</b><b style="left:54.500px">Friends Chemicals</b><b style="left:269.500px;width:142px;text-align:center">19-11-2019</b><b style="left:411.500px;width:124.500px;text-align:center">13704</b><b style="left:541.500px">193503.00000000</b><b style="left:720px;width:149.500px;text-align:center">19-11-2019</b><div class="y">1015</div></div>
<div class="r" style="top:834.32px"><b style="left:0;width:48.500px;text-align:center">17</b><b style="left:54.500px">Friends Chemicals</b><b style="left:269.500px;width:142px;text-align:center">19-11-2019</b><b style="left:411.500px;width:124.500px;text-align:center">13705</b><b style="left:541.500px">242274.00000000</b><b style="left:720px;width:149.500px;text-align:center">19-11-2019</b><div class="y">1015</div></div>
<div class="r" style="top:860.99px"><b style="left:0;width:48.500px;text-align:center">18</b><b style="left:54.500px">Friends Chemicals</b><b style="left:269.500px;width:142px;text-align:center">23-11-2019</b><b style="left:411.500px;width:124.500px;text-align:center">13737</b><b style="left:541.500px">396742.00000000</b><b style="left:720px;width:149.500px;text-align:center">23-11-2019</b><div class="y">1011</div></div>
<div class="r" style="top:887.66px"><b style="left:0;width:48.500px;text-align:center">19</b><b style="left:54.500px">Friends Chemicals</b><b style="left:269.500px;width:142px;text-align:center">30-11-2019</b><b style="left:411.500px;width:124.500px;text-align:center">13789</b><b style="left:541.500px">298731.00000000</b><b style="left:720px;width:149.500px;text-align:center">30-11-2019</b><div class="y">1004</div></div>
<div class="abs" style="left:1088px;top:578.500px;font-size:9.25px;line-height:11px;color:#555;white-space:nowrap">©2022 <span style="color:#2a7fc0">Extreme Solutions.</span></div>

<!--MAIN-->
</div>
</body></html>
